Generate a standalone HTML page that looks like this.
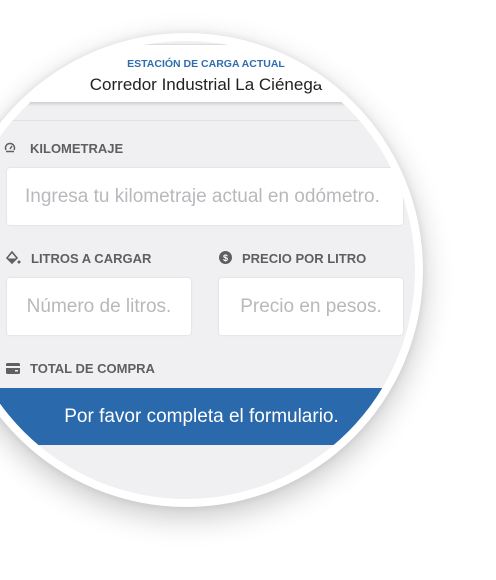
<!DOCTYPE html>
<html><head><meta charset="utf-8"><style>
*{margin:0;padding:0;box-sizing:border-box}
body{width:496px;height:580px;background:#fff;position:relative;overflow:hidden;font-family:"Liberation Sans",sans-serif}
.ring{position:absolute;left:-51px;top:33px;width:474px;height:474px;border-radius:50%;background:#fff;box-shadow:0 10px 30px rgba(0,0,0,.22),0 0 8px rgba(0,0,0,.08)}
.c{position:absolute;left:-43px;top:41px;width:458px;height:458px;border-radius:50%;overflow:hidden;background:#f0f0f2}
.in{position:absolute;left:43px;top:-41px;width:496px;height:580px}
.a{position:absolute;white-space:nowrap}
.hdr{left:-50px;top:44px;width:520px;height:58px;background:#fff;box-shadow:0 2px 3px rgba(0,0,0,.15);border-top:1px solid #ddd}
.t1{left:0;width:412px;top:58px;text-align:center;color:#2f6db0;font-size:10.5px;font-weight:bold}
.t2{left:0;width:412px;top:75px;text-align:center;color:#222;font-size:17px}
.line{left:-50px;width:520px;top:120px;height:1px;background:#e2e2e4}
.lab{font-size:13px;font-weight:bold;color:#5f5f63}
.box{background:#fff;border-radius:3px;box-shadow:0 0 2px rgba(0,0,0,.12);font-size:19px;color:#b9b9bd;line-height:57px}
.blue{left:-50px;width:453px;top:388px;height:57px;background:#2a69ab;color:#fff;font-size:19px;text-align:center;line-height:57px;padding-left:50px}
</style></head><body>
<div class="ring"></div>
<div class="c"><div class="in">
<div class="a hdr"></div>
<div class="a t1">ESTACIÓN DE CARGA ACTUAL</div>
<div class="a t2">Corredor Industrial La Ciénega</div>
<div class="a line"></div>
<svg class="a" style="left:4px;top:142px" width="12" height="12" viewBox="0 0 12 12"><path d="M2 8A4.5 4.5 0 1 1 10 8" fill="none" stroke="#5f5f63" stroke-width="1.5"/><path d="M6 7L8 4" stroke="#5f5f63" stroke-width="1.5"/><path d="M2 9.5H10" stroke="#5f5f63" stroke-width="1.5"/></svg>
<div class="a lab" style="left:30px;top:141px">KILOMETRAJE</div>
<div class="a box" style="left:7px;top:168px;width:396px;height:57px;padding-left:18px">Ingresa tu kilometraje actual en odómetro.</div>
<svg class="a" style="left:6px;top:251px" width="16" height="14" viewBox="0 0 16 14"><path d="M6 1L1 7L6 12L11 7Z" fill="none" stroke="#5f5f63" stroke-width="1.6"/><path d="M1.5 7.5H10.5L6 12Z" fill="#5f5f63"/><circle cx="13" cy="11" r="1.5" fill="#5f5f63"/></svg>
<div class="a lab" style="left:31px;top:251px">LITROS A CARGAR</div>
<svg class="a" style="left:219px;top:251px" width="13" height="13" viewBox="0 0 13 13"><circle cx="6.5" cy="6.5" r="6.5" fill="#5f5f63"/><text x="6.5" y="10" font-size="9" font-weight="bold" fill="#fff" text-anchor="middle" font-family="Liberation Sans">$</text></svg>
<div class="a lab" style="left:242px;top:251px">PRECIO POR LITRO</div>
<div class="a box" style="left:7px;top:278px;width:184px;height:57px;text-align:center">Número de litros.</div>
<div class="a box" style="left:219px;top:278px;width:184px;height:57px;text-align:center">Precio en pesos.</div>
<svg class="a" style="left:6px;top:363px" width="14" height="11" viewBox="0 0 14 11"><rect x="0" y="0" width="14" height="11" rx="1.5" fill="#5f5f63"/><rect x="0" y="3" width="14" height="2" fill="#f0f0f2"/><rect x="9" y="7" width="3" height="1.5" fill="#f0f0f2"/></svg>
<div class="a lab" style="left:30px;top:361px">TOTAL DE COMPRA</div>
<div class="a blue">Por favor completa el formulario.</div>
</div></div>
</body></html>
